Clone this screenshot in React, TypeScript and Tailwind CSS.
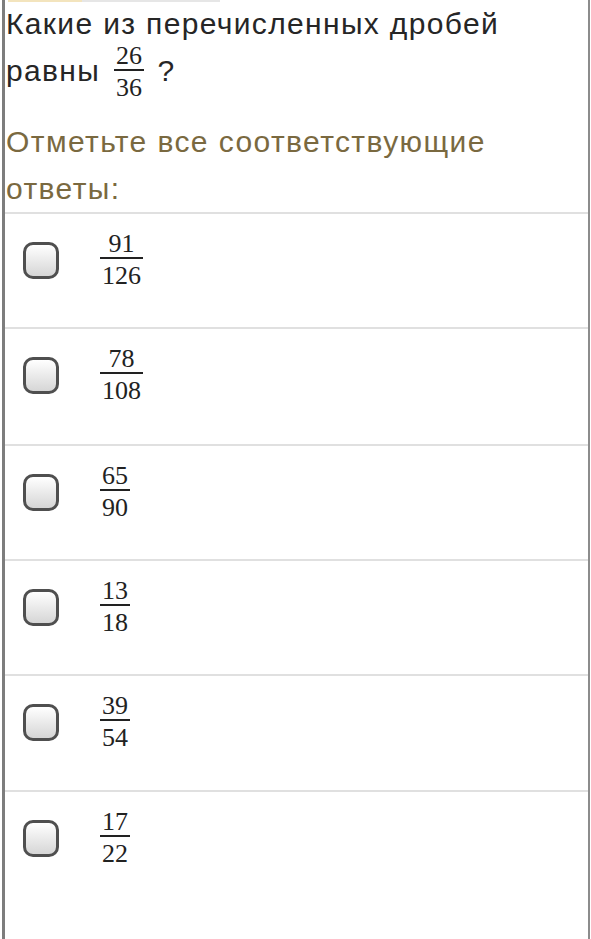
import React from "react";

const Frac = ({ n, d }: { n: string; d: string }) => (
  <span className="inline-flex flex-col items-center font-['Liberation_Serif',serif] text-[26px] leading-[26px] text-[#222]">
    <span className="px-[2px]">{n}</span>
    <span className="self-stretch h-[2px] bg-[#222]" />
    <span className="px-[2px] mt-[4px]">{d}</span>
  </span>
);

const Checkbox = () => (
  <div className="w-[36px] h-[37px] rounded-[10px] border-[3px] border-[#4f4f4f] bg-gradient-to-b from-[#ffffff] to-[#d6d6d6] shrink-0" />
);

const rows: { n: string; d: string; h: string }[] = [
  { n: "91", d: "126", h: "h-[115px]" },
  { n: "78", d: "108", h: "h-[117px]" },
  { n: "65", d: "90", h: "h-[115px]" },
  { n: "13", d: "18", h: "h-[115px]" },
  { n: "39", d: "54", h: "h-[116px]" },
  { n: "17", d: "22", h: "h-[149px]" },
];

export default function App() {
  return (
    <div className="w-[591px] h-[939px] bg-white overflow-hidden relative font-['Liberation_Sans',Arial,sans-serif]">
      <div className="absolute top-0 left-[8px] flex h-[2px]">
        <div className="w-[74px] bg-[#f3e4bd]" />
        <div className="w-[138px] bg-[#e6e6e6]" />
      </div>
      <div className="ml-[2px] w-[588px] h-[939px] border-l-[3px] border-l-[#7d7d7d] border-r-2 border-r-[#8c8c8c] flex flex-col">
        <div className="pl-[1px] text-[30px] tracking-[1.35px] leading-[47px] text-[#262626] whitespace-nowrap">
          Какие из перечисленных дробей
          <br />
          равны{" "}
          <span className="inline-flex flex-col items-center align-[17px] my-[-8px] mx-[4px] tracking-normal font-['Liberation_Serif',serif] text-[26px] leading-[26px] text-[#222]">
            <span className="px-[2px]">26</span>
            <span className="self-stretch h-[2px] bg-[#222]" />
            <span className="px-[2px] mt-[4px]">36</span>
          </span>{" "}
          ?
        </div>
        <div className="mt-[24px] pl-[1px] text-[30px] tracking-[1.4px] leading-[47px] text-[#7a6940] whitespace-nowrap">
          Отметьте все соответствующие
          <br />
          ответы:
        </div>
        {rows.map((r, i) => (
          <div
            key={i}
            className={`${r.h} shrink-0 border-t-2 border-t-[#e0e0e0] pt-[17px] pl-[18px] flex items-start`}
          >
            <div className="flex items-center">
              <Checkbox />
              <div className="ml-[41px]">
                <Frac n={r.n} d={r.d} />
              </div>
            </div>
          </div>
        ))}
      </div>
    </div>
  );
}
